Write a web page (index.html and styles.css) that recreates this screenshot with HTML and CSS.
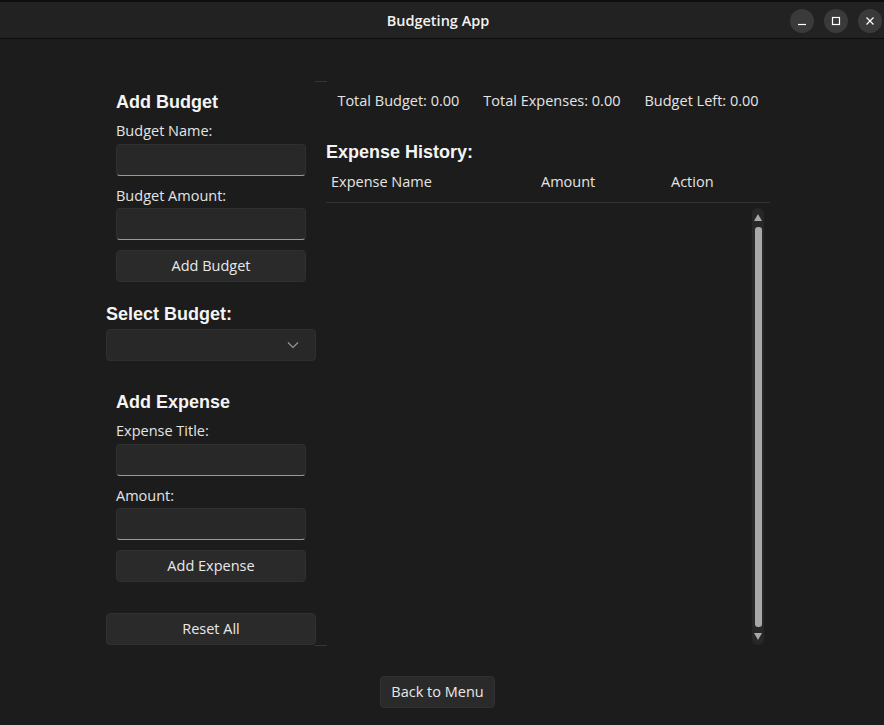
FILE: index.html
```html
<!DOCTYPE html>
<html>
<head>
<meta charset="utf-8">
<link rel="stylesheet" href="styles.css">
<title>Budgeting App</title>
</head>
<body>
<div class="topstrip"></div>
<header class="titlebar">
  <div class="title">Budgeting App</div>
  <div class="winbtns">
    <span class="wbtn"><svg width="10" height="10" viewBox="0 0 10 10"><path d="M1 8.5h8" stroke="#fff" stroke-width="1.2"/></svg></span>
    <span class="wbtn"><svg width="10" height="10" viewBox="0 0 10 10"><rect x="1.5" y="1.5" width="7" height="7" fill="none" stroke="#fff" stroke-width="1.2"/></svg></span>
    <span class="wbtn"><svg width="10" height="10" viewBox="0 0 10 10"><path d="M1.5 1.5l7 7M8.5 1.5l-7 7" stroke="#fff" stroke-width="1.2"/></svg></span>
  </div>
</header>
<main class="app">
  <div class="content">
    <section class="left">
      <div class="group">
        <h2 class="heading">Add Budget</h2>
        <label class="label first">Budget Name:</label>
        <div class="input"></div>
        <label class="label">Budget Amount:</label>
        <div class="input"></div>
        <button class="btn">Add Budget</button>
      </div>
      <h2 class="heading select-h">Select Budget:</h2>
      <div class="combo">
        <svg width="12" height="8" viewBox="0 0 12 8"><path d="M1 1.5l5 5 5-5" fill="none" stroke="#9a9a9a" stroke-width="1.1"/></svg>
      </div>
      <div class="group expense-group">
        <h2 class="heading">Add Expense</h2>
        <label class="label first">Expense Title:</label>
        <div class="input"></div>
        <label class="label">Amount:</label>
        <div class="input"></div>
        <button class="btn">Add Expense</button>
      </div>
      <button class="btn reset">Reset All</button>
    </section>
    <section class="right">
      <div class="summary">
        <span>Total Budget: 0.00</span>
        <span>Total Expenses: 0.00</span>
        <span>Budget Left: 0.00</span>
      </div>
      <h2 class="heading hist-h">Expense History:</h2>
      <div class="thead">
        <span>Expense Name</span>
        <span>Amount</span>
        <span>Action</span>
      </div>
      <div class="list">
        <div class="scrollbar">
          <svg class="arrow" width="8" height="7" viewBox="0 0 8 7"><path d="M4 0L8 7H0z" fill="#a8a8a8"/></svg>
          <div class="thumb"></div>
          <svg class="arrow" width="8" height="7" viewBox="0 0 8 7"><path d="M0 0h8L4 7z" fill="#a8a8a8"/></svg>
        </div>
      </div>
    </section>
  </div>
  <button class="btn back">Back to Menu</button>
</main>
</body>
</html>
```

FILE: styles.css
```css
* { box-sizing: border-box; }
html, body { margin: 0; padding: 0; }
body {
  background: #1c1c1c;
  color: #e4e4e4;
  font-family: "Open Sans", "Noto Sans", sans-serif;
  font-size: 14.5px;
  width: 884px;
  height: 725px;
  overflow: hidden;
}
.topstrip { height: 2px; background: #0d0d0d; }
.titlebar {
  height: 37px;
  background: #222222;
  border-bottom: 1px solid #0d0d0d;
  display: flex;
  align-items: center;
  justify-content: center;
  position: relative;
}
.title {
  font-weight: 600;
  font-size: 14.5px;
  color: #f2f2f2;
  margin-top: 1px;
  margin-right: 8px;
}
.winbtns {
  position: absolute;
  right: 2px;
  top: 7px;
  display: flex;
  gap: 10px;
}
.wbtn {
  width: 24px;
  height: 24px;
  border-radius: 50%;
  background: #3a3a3a;
  display: flex;
  align-items: center;
  justify-content: center;
}
.app {
  display: flex;
  flex-direction: column;
  align-items: center;
  padding-top: 42px;
}
.content {
  display: flex;
  gap: 10px;
  margin-right: 8px;
  position: relative;
}
.content::before,
.content::after {
  content: "";
  position: absolute;
  left: 209px;
  width: 12px;
  height: 1px;
  background: #363636;
}
.content::before { top: 0; }
.content::after { top: 564px; }
.left {
  width: 210px;
  display: flex;
  flex-direction: column;
}
.group {
  padding: 10px 10px 0 10px;
  display: flex;
  flex-direction: column;
}
.heading {
  margin: 0;
  font-family: "Liberation Sans", Arial, sans-serif;
  font-weight: bold;
  font-size: 18px;
  line-height: 22px;
  color: #f4f4f4;
}
.label {
  display: block;
  line-height: 20px;
  margin-top: 10px;
  margin-bottom: 2px;
  color: #e4e4e4;
}
.label.first { margin-top: 8px; margin-bottom: 3px; }
.input {
  height: 32px;
  background: #282828;
  border: 1px solid #2f2f2f;
  border-bottom: 1px solid #9a9a9a;
  border-radius: 4px;
}
.btn {
  font-family: "Open Sans", "Noto Sans", sans-serif;
  font-size: 14.5px;
  line-height: 18px;
  color: #e8e8e8;
  height: 32px;
  background: #2a2a2a;
  border: 1px solid #303030;
  border-radius: 4px;
  padding: 0 0 1px 0;
  margin-top: 10px;
}
.select-h { margin-top: 21px; }
.combo {
  margin-top: 4px;
  height: 32px;
  background: #282828;
  border: 1px solid #2f2f2f;
  border-radius: 4px;
  display: flex;
  align-items: center;
  justify-content: flex-end;
  padding-right: 16px;
}
.expense-group { padding-top: 30px; }
.reset { margin-top: 31px; }
.right {
  width: 444px;
  display: flex;
  flex-direction: column;
}
.summary {
  margin-top: 10px;
  display: flex;
  justify-content: center;
  gap: 24px;
  line-height: 20px;
  color: #e4e4e4;
}
.hist-h { margin-top: 30px; }
.thead {
  margin-top: 9px;
  display: grid;
  grid-template-columns: 210px 130px 1fr;
  padding: 0 5px 10px 5px;
  line-height: 20px;
  border-bottom: 1px solid #333333;
  color: #e4e4e4;
}
.list {
  height: 443px;
  display: flex;
  justify-content: flex-end;
  padding: 5px 6px 0 0;
}
.scrollbar {
  width: 12px;
  height: 437px;
  background: #272727;
  border-radius: 6px;
  display: flex;
  flex-direction: column;
  align-items: center;
  padding: 6px 0 5px 0;
}
.thumb {
  width: 7px;
  flex: 1;
  margin: 6px 0;
  background: #a8a8a8;
  border-radius: 3px;
}
.back {
  margin-top: 30px;
  margin-right: 9px;
  width: 115px;
}
```
